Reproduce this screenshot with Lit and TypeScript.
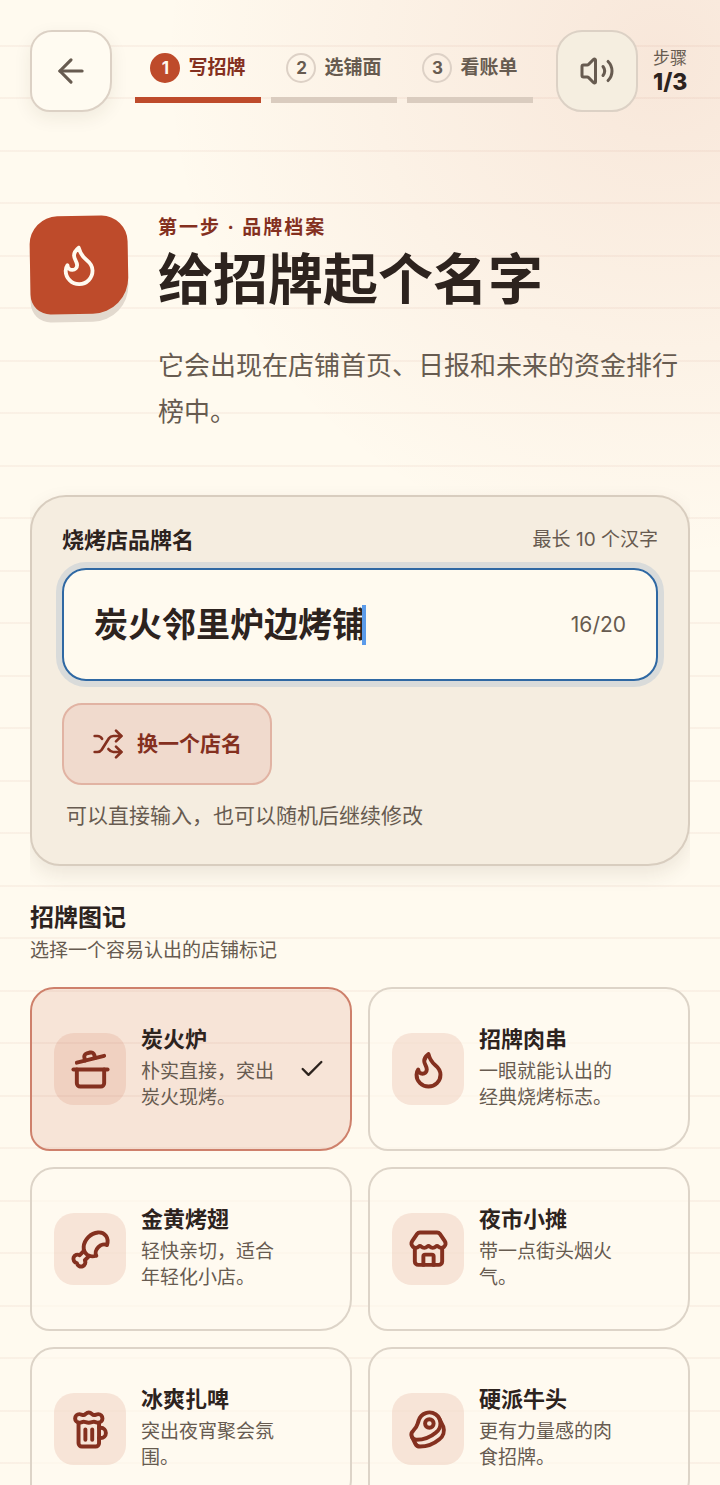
import { LitElement, html, css, svg } from "lit";
import { customElement, property, state } from "lit/decorators.js";
import { classMap } from "lit/directives/class-map.js";

const ICONS: Record<string, unknown> = {
  back: svg`<path d="m12 19-7-7 7-7"/><path d="M19 12H5"/>`,
  volume: svg`<path d="M11 4.702a.705.705 0 0 0-1.203-.498L6.413 7.587A1.4 1.4 0 0 1 5.416 8H3a1 1 0 0 0-1 1v6a1 1 0 0 0 1 1h2.416a1.4 1.4 0 0 1 .997.413l3.383 3.384A.705.705 0 0 0 11 19.298z"/><path d="M16 9a5 5 0 0 1 0 6"/><path d="M19.364 18.364a9 9 0 0 0 0-12.728"/>`,
  flame: svg`<path d="M12 3q1 4 4 6.5t3 5.5a1 1 0 0 1-14 0 5 5 0 0 1 1-3 1 1 0 0 0 5 0c0-2-1.5-3-1.5-5q0-2 2.5-4"/>`,
  shuffle: svg`<path d="m18 14 4 4-4 4"/><path d="m18 2 4 4-4 4"/><path d="M2 18h1.973a4 4 0 0 0 3.3-1.7l5.454-8.6a4 4 0 0 1 3.3-1.7H22"/><path d="M2 6h1.972a4 4 0 0 1 3.6 2.2"/><path d="M22 18h-6.041a4 4 0 0 1-3.3-1.8l-.359-.45"/>`,
  pot: svg`<path d="M2 12h20"/><path d="M20 12v8a2 2 0 0 1-2 2H6a2 2 0 0 1-2-2v-8"/><path d="m4 8 16-4"/><path d="m8.86 6.78-.45-1.81a2 2 0 0 1 1.45-2.43l1.94-.48a2 2 0 0 1 2.43 1.46l.45 1.8"/>`,
  drumstick: svg`<path d="M15.4 15.63a7.875 6 135 1 1 6.23-6.23 4.5 3.43 135 0 0-6.23 6.23"/><path d="m8.29 12.71-2.6 2.6a2.5 2.5 0 1 0-1.65 4.65A2.5 2.5 0 1 0 8.7 18.3l2.59-2.59"/>`,
  store: svg`<path d="M15 21v-5a1 1 0 0 0-1-1h-4a1 1 0 0 0-1 1v5"/><path d="M17.774 10.31a1.12 1.12 0 0 0-1.549 0 2.5 2.5 0 0 1-3.451 0 1.12 1.12 0 0 0-1.548 0 2.5 2.5 0 0 1-3.452 0 1.12 1.12 0 0 0-1.549 0 2.5 2.5 0 0 1-3.77-3.248l2.889-4.184A2 2 0 0 1 7 2h10a2 2 0 0 1 1.653.873l2.895 4.192a2.5 2.5 0 0 1-3.774 3.244"/><path d="M4 10.95V19a2 2 0 0 0 2 2h12a2 2 0 0 0 2-2v-8.05"/>`,
  beer: svg`<path d="M17 11h1a3 3 0 0 1 0 6h-1"/><path d="M9 12v6"/><path d="M13 12v6"/><path d="M14 7.5c-1 0-1.44.5-3 .5s-2-.5-3-.5-1.72.5-2.5.5a2.5 2.5 0 0 1 0-5c.78 0 1.57.5 2.5.5S9.44 2 11 2s2 1.5 3 1.5 1.72-.5 2.5-.5a2.5 2.5 0 0 1 0 5c-.78 0-1.5-.5-2.5-.5Z"/><path d="M5 8v12a2 2 0 0 0 2 2h8a2 2 0 0 0 2-2V8"/>`,
  beef: svg`<path d="M16.4 13.7A6.5 6.5 0 1 0 6.28 6.6c-1.1 3.13-.78 3.9-3.18 6.08A3 3 0 0 0 5 18c4 0 8.4-1.8 11.4-4.3"/><path d="m18.5 6 2.19 4.5a6.48 6.48 0 0 1-2.29 7.2C15.4 20.2 11 22 7 22a3 3 0 0 1-2.68-1.66L2.4 16.5"/><circle cx="12.5" cy="8.5" r="2.5"/>`,
  check: svg`<path d="M20 6 9 17l-5-5"/>`,
};

@customElement("line-icon")
class LineIcon extends LitElement {
  @property() name = "";

  static styles = css`
    :host {
      display: block;
      flex: none;
    }
    .glyph {
      display: block;
      width: 100%;
      height: 100%;
      fill: none;
      stroke: currentColor;
      stroke-width: var(--icon-stroke, 2);
      stroke-linecap: round;
      stroke-linejoin: round;
    }
  `;

  render() {
    return html`<svg class="glyph" viewBox="0 0 24 24" aria-hidden="true">${ICONS[this.name]}</svg>`;
  }
}

interface Mark {
  id: string;
  icon: string;
  title: string;
  text: string;
}

const MARKS: Mark[] = [
  { id: "stove", icon: "pot", title: "炭火炉", text: "朴实直接，突出炭火现烤。" },
  { id: "skewer", icon: "flame", title: "招牌肉串", text: "一眼就能认出的经典烧烤标志。" },
  { id: "wing", icon: "drumstick", title: "金黄烤翅", text: "轻快亲切，适合年轻化小店。" },
  { id: "stall", icon: "store", title: "夜市小摊", text: "带一点街头烟火气。" },
  { id: "beer", icon: "beer", title: "冰爽扎啤", text: "突出夜宵聚会氛围。" },
  { id: "bull", icon: "beef", title: "硬派牛头", text: "更有力量感的肉食招牌。" },
];

const STEPS = ["写招牌", "选铺面", "看账单"];
const NAMES = ["炭火邻里炉边烤铺", "巷口老友炭烤小馆", "月下红炉烧烤铺"];

@customElement("app-root")
class AppRoot extends LitElement {
  @state() private brand = NAMES[0];
  @state() private mark = "stove";

  static styles = css`
    :host {
      display: block;
      height: 100vh;
      overflow: hidden auto;
      scrollbar-width: none;
      color: #2d231e;
      font-family: Inter, "Noto Sans CJK SC", "Noto Sans", sans-serif;
      background:
        repeating-linear-gradient(
          to bottom,
          transparent 0 45px,
          rgba(170, 80, 60, 0.055) 45px 47px,
          transparent 47px 97px,
          rgba(170, 80, 60, 0.055) 97px 99px,
          transparent 99px 105px
        ),
        radial-gradient(circle at 92% 4%, rgba(190, 75, 43, 0.11), transparent 500px),
        #fffaef;
    }
    * {
      box-sizing: border-box;
    }
    h1,
    h2,
    p,
    ol {
      margin: 0;
      padding: 0;
    }
    button,
    input {
      font: inherit;
      color: inherit;
    }
    .page {
      display: flex;
      flex-direction: column;
      padding: 30px;
    }

    .top {
      display: flex;
      align-items: center;
      gap: 15px;
    }
    .square {
      display: grid;
      place-items: center;
      flex: none;
      width: 82px;
      height: 82px;
      padding: 0;
      border: 2px solid #dcd1c5;
      border-radius: 26px;
      color: #675b50;
      background: #f5eee0;
      cursor: pointer;
    }
    .square.back {
      border-radius: 22px 24px 30px 20px;
      background: #fffbf1;
      box-shadow: 0 6px 18px rgba(70, 45, 30, 0.08);
    }
    .square line-icon {
      width: 36px;
      height: 36px;
    }
    .square.back line-icon {
      width: 38px;
      height: 38px;
    }
    .steps {
      display: grid;
      grid-template-columns: repeat(3, 1fr);
      gap: 10px;
      flex: 1;
      margin: 0 8px;
      list-style: none;
    }
    .step {
      display: flex;
      align-items: center;
      justify-content: center;
      gap: 8px;
      height: 64px;
      border-bottom: 6px solid #daccbf;
      color: #675b50;
      font-size: 19px;
      font-weight: 700;
      line-height: 28px;
      white-space: nowrap;
    }
    .step.on {
      border-color: #be4b2b;
      color: #84301f;
    }
    .num {
      display: grid;
      place-items: center;
      width: 30px;
      height: 30px;
      border: 2px solid #ddd1c6;
      border-radius: 50%;
      font-size: 17px;
      line-height: 26px;
    }
    .on .num {
      border-color: #be4b2b;
      background: #be4b2b;
      color: #fffaef;
    }
    .count {
      flex: none;
      display: flex;
      flex-direction: column;
      align-items: flex-start;
      min-width: 37px;
      color: #675b50;
      font-size: 17px;
      line-height: 22px;
    }
    .count strong {
      color: #2d231e;
      font-size: 23px;
      font-weight: 800;
      line-height: 26px;
    }

    .hero {
      display: flex;
      align-items: flex-start;
      gap: 30px;
      margin-top: 104px;
    }
    .badge {
      display: grid;
      place-items: center;
      flex: none;
      width: 98px;
      height: 98px;
      border-radius: 28px 26px 36px 20px;
      background: #be4b2b;
      color: #fffaef;
      box-shadow: 0 8px 0 #e2d9ce;
      transform: rotate(-1deg);
    }
    .badge line-icon {
      width: 46px;
      height: 46px;
    }
    .kicker {
      color: #84301f;
      font-size: 19px;
      font-weight: 700;
      line-height: 24px;
      letter-spacing: 2px;
    }
    .title {
      margin-top: 6px;
      font-size: 55px;
      font-weight: 700;
      line-height: 66px;
    }
    .lead {
      margin-top: 31px;
      color: #675b50;
      font-size: 26px;
      line-height: 46px;
    }

    .clip {
      margin-top: 40px;
      padding: 20px 0 36px;
      overflow: hidden;
    }
    .panel {
      display: flex;
      flex-direction: column;
      align-items: flex-start;
      padding: 30px 30px 35px;
      border: 2px solid #d8cdbf;
      border-radius: 36px 34px 42px 30px;
      background: #f5ede0;
      box-shadow: 0 8px 20px rgba(70, 45, 30, 0.1);
    }
    .labels {
      display: flex;
      align-items: center;
      justify-content: space-between;
      width: 100%;
      line-height: 26px;
    }
    .label {
      font-size: 22px;
      font-weight: 700;
    }
    .limit {
      color: #675b50;
      font-size: 19px;
    }
    .field {
      display: flex;
      align-items: center;
      width: 100%;
      height: 113px;
      margin-top: 15px;
      padding: 0 30px;
      border: 2px solid #2f68a3;
      border-radius: 24px;
      background: #fffaef;
      box-shadow: 0 0 0 6px #d9dbda;
    }
    .name {
      field-sizing: content;
      min-width: 0;
      padding: 0;
      border: 0;
      outline: 0;
      background: none;
      font-size: 34px;
      font-weight: 700;
      line-height: 50px;
      caret-color: transparent;
    }
    .caret {
      flex: none;
      width: 4px;
      height: 40px;
      margin-left: -4px;
      background: #5b9bea;
    }
    .used {
      margin-left: auto;
      color: #675b50;
      font-size: 21px;
    }
    .swap {
      display: flex;
      align-items: center;
      gap: 13px;
      height: 82px;
      margin-top: 22px;
      padding: 0 28px;
      border: 2px solid #e1b3a3;
      border-radius: 20px;
      background: #f0dacd;
      color: #84301f;
      font-size: 21px;
      font-weight: 700;
      line-height: 26px;
      cursor: pointer;
    }
    .swap line-icon {
      width: 32px;
      height: 32px;
    }
    .hint {
      margin-top: 18px;
      padding: 0 4px;
      color: #675b50;
      font-size: 21px;
      line-height: 26px;
    }

    .subhead {
      font-size: 24px;
      font-weight: 700;
      line-height: 32px;
    }
    .sub {
      margin-top: 3px;
      color: #675b50;
      font-size: 19px;
      line-height: 28px;
    }
    .marks {
      display: grid;
      grid-template-columns: repeat(2, 1fr);
      gap: 16px;
      margin-top: 22px;
    }
    .card {
      position: relative;
      display: grid;
      grid-template-columns: 72px 1fr 30px;
      align-items: center;
      gap: 15px;
      min-height: 164px;
      padding: 0 22px;
      border: 2px solid #ddd4c8;
      border-radius: 24px 24px 32px 20px;
      background: rgba(255, 251, 240, 0.65);
      cursor: pointer;
    }
    .card.on {
      border-color: #ce806b;
      background: rgba(190, 75, 43, 0.12);
    }
    .radio {
      position: absolute;
      inset: 0;
      margin: 0;
      opacity: 0;
      cursor: pointer;
    }
    .tile {
      --icon-stroke: 2.3;
      display: grid;
      place-items: center;
      width: 72px;
      height: 72px;
      border-radius: 20px;
      background: rgba(190, 75, 43, 0.12);
      color: #84301f;
    }
    .tile line-icon {
      width: 41px;
      height: 41px;
    }
    .words {
      display: flex;
      flex-direction: column;
      gap: 8px;
    }
    .card-title {
      font-size: 22px;
      font-weight: 700;
      line-height: 24px;
    }
    .card-text {
      color: #675b50;
      font-size: 19px;
      line-height: 26px;
    }
    .tick {
      width: 28px;
      height: 28px;
    }
  `;

  private shuffle() {
    const at = NAMES.indexOf(this.brand);
    this.brand = NAMES[(at + 1) % NAMES.length];
  }

  render() {
    return html`
      <main class="page">
        <header class="top">
          <button class="square back" aria-label="返回"><line-icon name="back"></line-icon></button>
          <ol class="steps">
            ${STEPS.map(
              (label, i) => html`<li class=${classMap({ step: true, on: i === 0 })}>
                <span class="num">${i + 1}</span><span>${label}</span>
              </li>`
            )}
          </ol>
          <button class="square" aria-label="声音"><line-icon name="volume"></line-icon></button>
          <div class="count"><span>步骤</span><strong>1/3</strong></div>
        </header>

        <section class="hero">
          <div class="badge"><line-icon name="flame"></line-icon></div>
          <div>
            <p class="kicker">第一步 · 品牌档案</p>
            <h1 class="title">给招牌起个名字</h1>
            <p class="lead">它会出现在店铺首页、日报和未来的资金排行榜中。</p>
          </div>
        </section>

        <div class="clip">
          <section class="panel">
            <div class="labels">
              <label class="label" for="brand">烧烤店品牌名</label>
              <span class="limit">最长 10 个汉字</span>
            </div>
            <div class="field">
              <input
                class="name"
                id="brand"
                type="text"
                .value=${this.brand}
                @input=${(e: Event) => (this.brand = (e.target as HTMLInputElement).value)}
              />
              <span class="caret"></span>
              <span class="used">${this.brand.length * 2}/20</span>
            </div>
            <button class="swap" @click=${this.shuffle}>
              <line-icon name="shuffle"></line-icon>换一个店名
            </button>
            <p class="hint">可以直接输入，也可以随机后继续修改</p>
          </section>
        </div>

        <section>
          <h2 class="subhead">招牌图记</h2>
          <p class="sub">选择一个容易认出的店铺标记</p>
          <div class="marks" role="radiogroup" aria-label="招牌图记">
            ${MARKS.map(
              (m) => html`<label class=${classMap({ card: true, on: m.id === this.mark })}>
                <input
                  class="radio"
                  type="radio"
                  name="mark"
                  .checked=${m.id === this.mark}
                  @change=${() => (this.mark = m.id)}
                />
                <span class="tile"><line-icon name=${m.icon}></line-icon></span>
                <span class="words">
                  <span class="card-title">${m.title}</span>
                  <span class="card-text">${m.text}</span>
                </span>
                ${m.id === this.mark ? html`<line-icon class="tick" name="check"></line-icon>` : ""}
              </label>`
            )}
          </div>
        </section>
      </main>
    `;
  }
}
